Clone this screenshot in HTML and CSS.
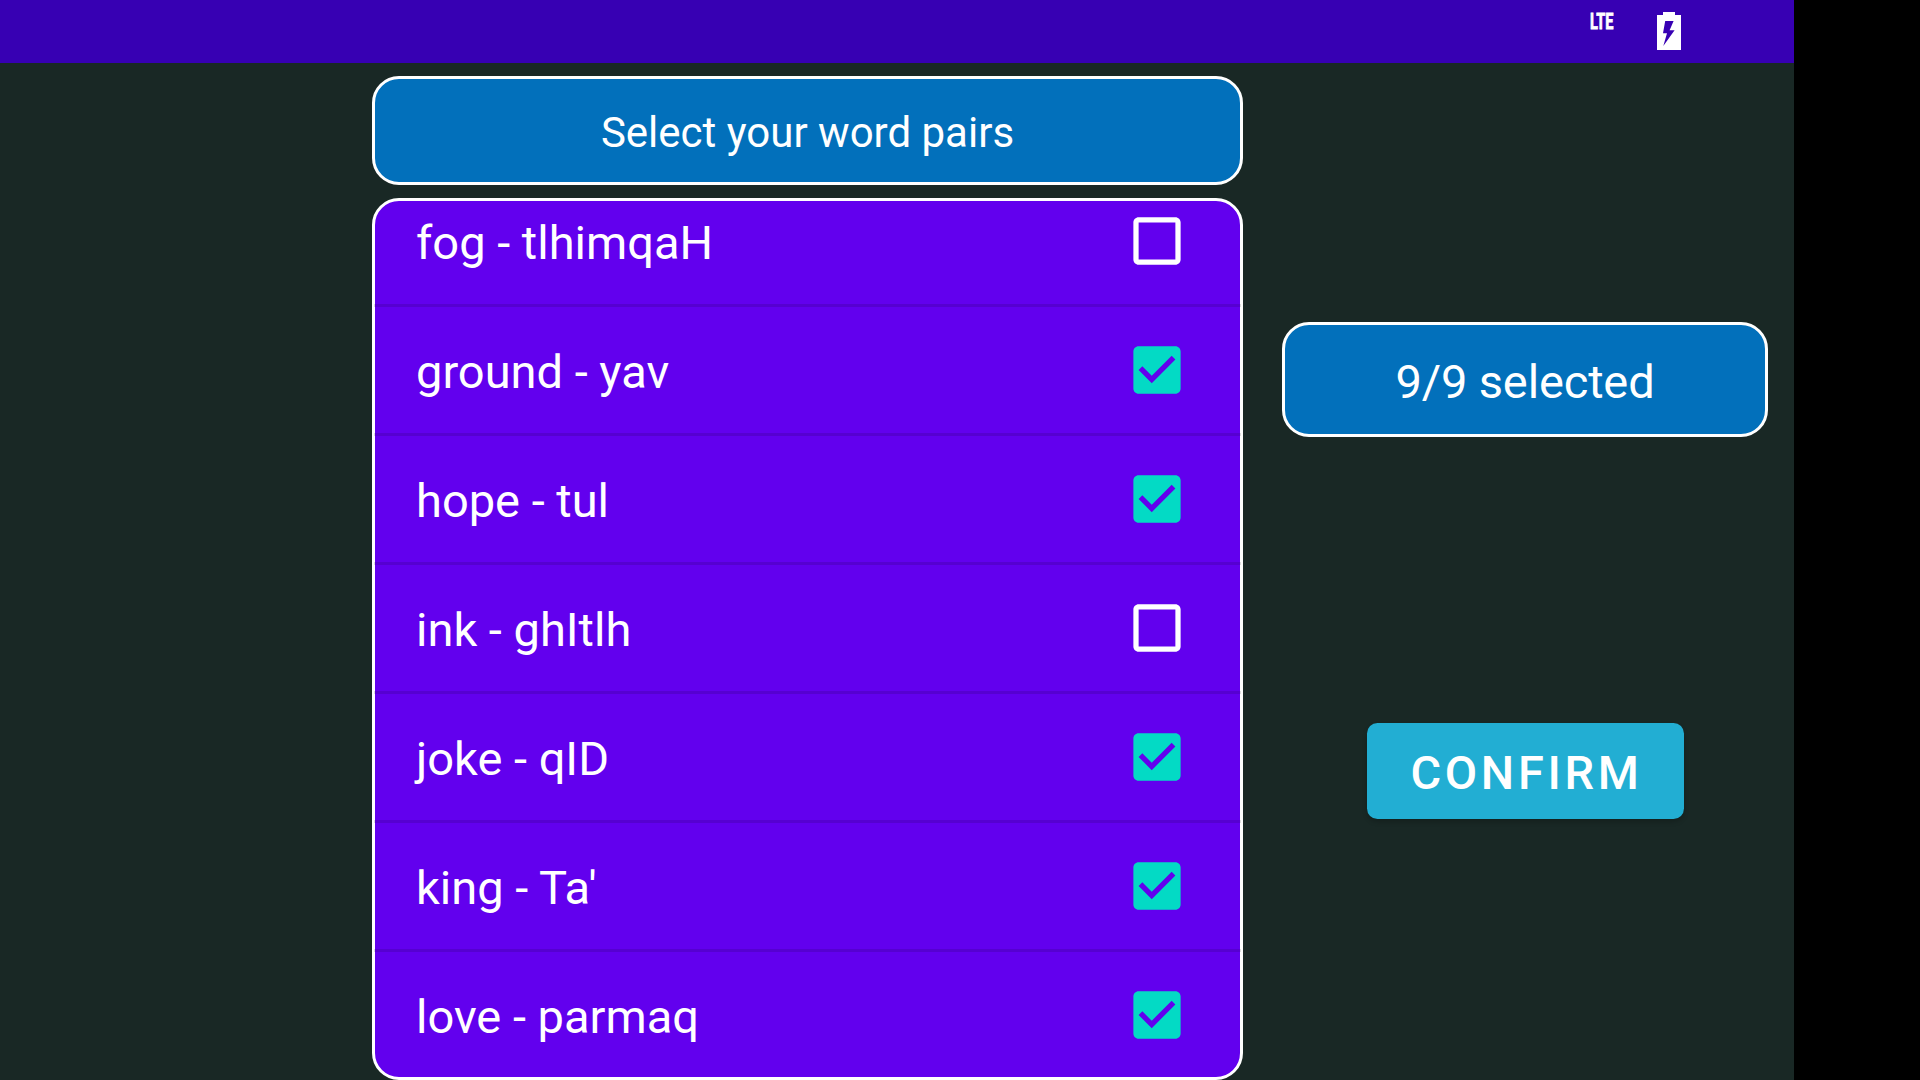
FILE: index.html
```html
<!DOCTYPE html>
<html lang="en">
<head>
<meta charset="utf-8">
<title>Word pairs</title>
<link rel="stylesheet" href="styles.css">
</head>
<body>
<svg class="defs" aria-hidden="true">
  <symbol id="box-off" viewBox="-0.19 -0.19 24.38 24.38"><path d="M19 5v14H5V5h14m0-2H5c-1.1 0-2 .9-2 2v14c0 1.1.9 2 2 2h14c1.1 0 2-.9 2-2V5c0-1.1-.9-2-2-2z"/></symbol>
  <symbol id="box-on" viewBox="-0.19 -0.19 24.38 24.38"><path d="M19 3H5c-1.11 0-2 .9-2 2v14c0 1.1.89 2 2 2h14c1.11 0 2-.9 2-2V5c0-1.1-.89-2-2-2zm-9 14l-5-5 1.41-1.41L10 14.17l7.59-7.59L19 8l-9 9z"/></symbol>
</svg>
<div class="screen">
  <header class="status-bar">
    <span class="network">LTE</span>
    <svg class="battery" viewBox="0 0 24 38"><path fill-rule="evenodd" d="M6 0h12v3h6v35H0V3h6zM8.2 9L6 21.3h4L6.3 34L17.6 18.3h-5L16.6 9z"/></svg>
  </header>
  <main class="content">
    <section class="words">
      <h1 class="panel title">Select your word pairs</h1>
      <div class="panel list-panel">
        <ul class="list">
          <li class="row"><span class="pair">fog - tlhimqaH</span><svg class="check"><use href="#box-off"/></svg></li>
          <li class="row"><span class="pair">ground - yav</span><svg class="check on"><use href="#box-on"/></svg></li>
          <li class="row"><span class="pair">hope - tul</span><svg class="check on"><use href="#box-on"/></svg></li>
          <li class="row"><span class="pair">ink - ghItlh</span><svg class="check"><use href="#box-off"/></svg></li>
          <li class="row"><span class="pair">joke - qID</span><svg class="check on"><use href="#box-on"/></svg></li>
          <li class="row"><span class="pair">king - Ta'</span><svg class="check on"><use href="#box-on"/></svg></li>
          <li class="row"><span class="pair">love - parmaq</span><svg class="check on"><use href="#box-on"/></svg></li>
        </ul>
      </div>
    </section>
    <aside class="side">
      <div class="panel counter">9/9 selected</div>
      <button class="confirm" type="button">CONFIRM</button>
    </aside>
  </main>
</div>
</body>
</html>
```
FILE: styles.css
```css
* {
  box-sizing: border-box;
}

body {
  margin: 0;
  height: 1080px;
  overflow: hidden;
  background: #000;
  color: #fff;
  font-family: Roboto, sans-serif;
}

.defs {
  display: none;
}

.screen {
  display: flex;
  flex-direction: column;
  width: 1794px;
  height: 1080px;
  background: #192825;
}

.status-bar {
  display: flex;
  flex: none;
  justify-content: flex-end;
  align-items: flex-start;
  gap: 43px;
  height: 63px;
  padding: 12px 113px 0 0;
  background: #3700b3;
}

.network {
  width: 24px;
  font-size: 22px;
  font-weight: 700;
  line-height: 20px;
  -webkit-text-stroke: 0.8px #fff;
  transform: scaleX(0.66);
  transform-origin: left;
}

.battery {
  width: 24px;
  height: 38px;
  fill: #fff;
}

.content {
  display: flex;
  flex: 1;
  gap: 39px;
  padding: 13px 26px 0 372px;
}

.words {
  display: flex;
  flex-direction: column;
  gap: 13px;
  width: 871px;
}

.panel {
  border: 3px solid #fff;
  border-radius: 27px;
  background: #0270bb;
}

.title {
  display: flex;
  align-items: center;
  justify-content: center;
  height: 109px;
  margin: 0;
  padding-top: 4px;
  font-size: 42px;
  font-weight: 400;
}

.list-panel {
  height: 882px;
  overflow: clip;
  overflow-clip-margin: 1px;
  background: #6200ee;
}

.list {
  margin: -23px -1px 0;
  padding: 0;
  list-style: none;
}

.row {
  display: flex;
  align-items: center;
  justify-content: space-between;
  height: 129px;
  padding: 0 52px 0 42px;
  border-bottom: 3px solid rgba(0, 0, 0, 0.12);
  font-size: 47px;
}

.row:last-child {
  border-bottom-color: transparent;
}

.pair {
  padding-top: 3px;
}

.check {
  width: 64px;
  height: 64px;
  fill: #fff;
}

.check.on {
  fill: #03dac5;
}

.side {
  display: flex;
  flex-direction: column;
  align-items: center;
  gap: 286px;
  width: 486px;
  padding-top: 246px;
}

.counter {
  display: flex;
  align-items: center;
  justify-content: center;
  width: 486px;
  height: 115px;
  padding-top: 4px;
  font-size: 47px;
  letter-spacing: -0.15px;
}

.confirm {
  width: 317px;
  height: 96px;
  padding: 2px 0 0 3px;
  border: 0;
  border-radius: 10.5px;
  background: #22aed3;
  box-shadow: 0 3px 5px rgba(0, 0, 0, 0.2);
  color: #fff;
  font: 500 47px Roboto, sans-serif;
  letter-spacing: 3.7px;
}
```
